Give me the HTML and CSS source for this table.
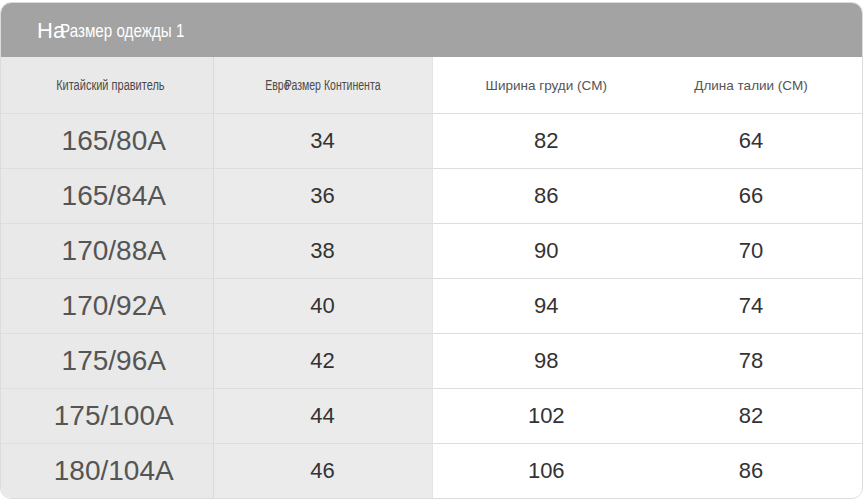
FILE: index.html
```html
<!DOCTYPE html>
<html lang="ru">
<head>
<meta charset="utf-8">
<title>Размер одежды</title>
<link rel="stylesheet" href="styles.css">
</head>
<body>
<div class="card">
  <div class="title"><span class="title-a">На</span><span class="title-b">Размер одежды 1</span></div>
  <table class="sizes">
    <colgroup>
      <col class="c1"><col class="c2"><col class="c3"><col class="c4">
    </colgroup>
    <thead>
      <tr>
        <th class="g1 pad1"><span class="narrow">Китайский правитель</span></th>
        <th class="g2"><span class="narrow tight">Евро<span class="over">Размер Континента</span></span></th>
        <th class="w">Ширина груди (СМ)</th>
        <th class="w last">Длина талии (СМ)</th>
      </tr>
    </thead>
    <tbody>
      <tr><td class="g1 big">165/80A</td><td class="g2">34</td><td class="w">82</td><td class="w last">64</td></tr>
      <tr><td class="g1 big">165/84A</td><td class="g2">36</td><td class="w">86</td><td class="w last">66</td></tr>
      <tr><td class="g1 big">170/88A</td><td class="g2">38</td><td class="w">90</td><td class="w last">70</td></tr>
      <tr><td class="g1 big">170/92A</td><td class="g2">40</td><td class="w">94</td><td class="w last">74</td></tr>
      <tr><td class="g1 big">175/96A</td><td class="g2">42</td><td class="w">98</td><td class="w last">78</td></tr>
      <tr><td class="g1 big">175/100A</td><td class="g2">44</td><td class="w">102</td><td class="w last">82</td></tr>
      <tr><td class="g1 big">180/104A</td><td class="g2">46</td><td class="w">106</td><td class="w last">86</td></tr>
    </tbody>
  </table>
</div>
</body>
</html>
```

FILE: styles.css
```css
html, body {
  margin: 0;
  padding: 0;
  background: #ffffff;
}

body {
  font-family: "Liberation Sans", Arial, sans-serif;
  padding-top: 2px;
}

.card {
  width: 861px;
  border: 1px solid #dcdcdc;
  border-radius: 11px;
  overflow: hidden;
  background: #ffffff;
}

.title {
  height: 54px;
  background: #a3a3a3;
  display: flex;
  align-items: center;
  padding-left: 36px;
  padding-top: 1px;
  box-sizing: border-box;
  color: #ffffff;
}

.title-a {
  font-size: 22px;
  position: relative;
  z-index: 1;
}

.title-b {
  display: inline-block;
  font-size: 19px;
  margin-left: -5px;
  transform: scaleX(0.8);
  transform-origin: left center;
}

.sizes {
  width: 861px;
  border-collapse: collapse;
  table-layout: fixed;
}

.c1 { width: 212px; }
.c2 { width: 219px; }
.c3 { width: 228px; }
.c4 { width: 202px; }

.sizes th,
.sizes td {
  text-align: center;
  padding: 0;
  height: 54px;
  border-top: 1px solid #dedede;
}

.sizes th {
  height: 56px;
  border-top: none;
  font-weight: normal;
  color: #555555;
  font-size: 13.5px;
}

.narrow {
  display: inline-block;
  font-size: 15.5px;
  color: #4a4a4a;
  transform: scaleX(0.71);
  white-space: nowrap;
}

.narrow.tight {
  transform: scaleX(0.68);
}

.over {
  margin-left: -7px;
}

.pad1 {
  padding-left: 8px !important;
}

.g1 {
  background: #e9e9e9;
  border-right: 1px solid #d9d9d9;
}

.g2 {
  background: #ebebeb;
  border-right: 1px solid #e4e4e4;
}

.w {
  background: #ffffff;
}

.last {
  padding-right: 20px !important;
}

.sizes td {
  font-size: 22px;
  color: #333333;
}

.sizes td.big {
  font-size: 28px;
  color: #555555;
  padding-left: 14px;
}
```
